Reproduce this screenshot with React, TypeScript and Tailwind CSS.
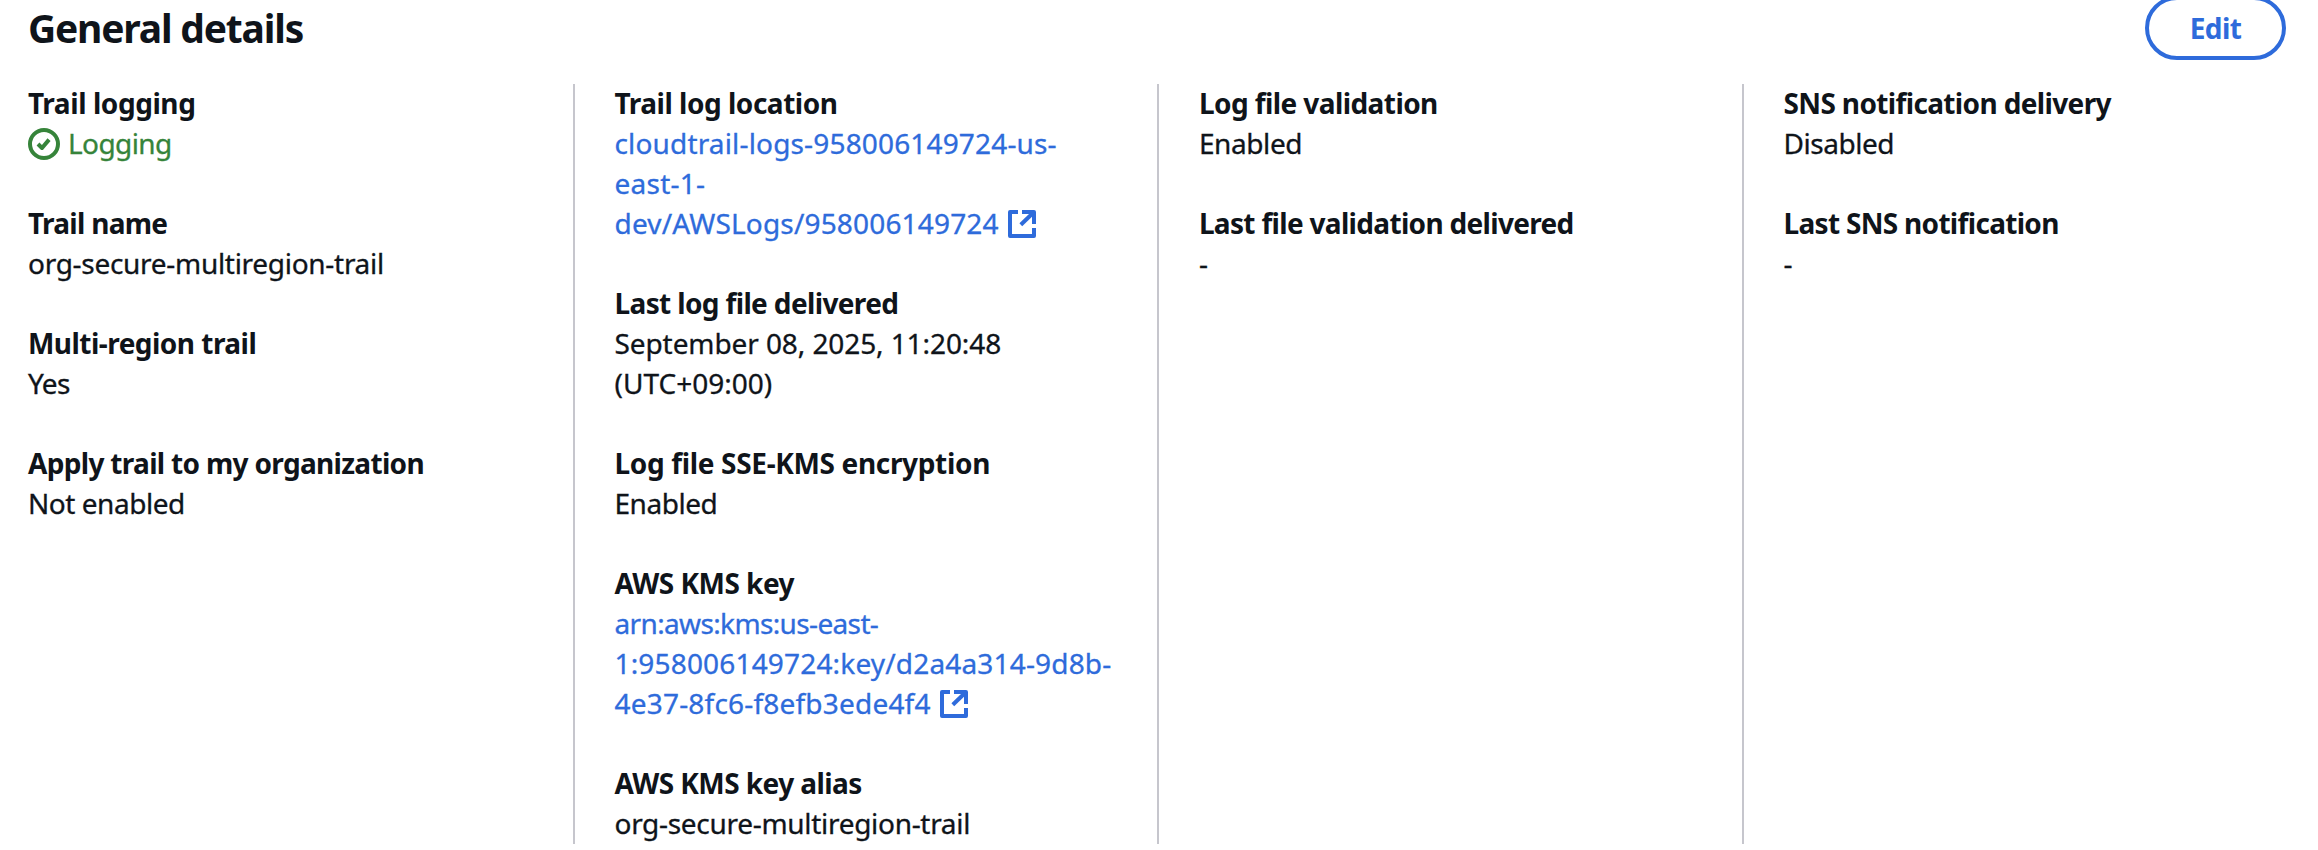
import type { ReactNode } from "react";

function CheckIcon() {
  return (
    <svg
      viewBox="0 0 16 16"
      className="mt-0.5 size-8 shrink-0"
      fill="none"
      stroke="currentColor"
      strokeWidth="2"
      strokeLinejoin="round"
    >
      <circle cx="8" cy="8" r="7" />
      <path d="m5 8 2 2 3.521-4.2" />
    </svg>
  );
}

function ExternalIcon() {
  return (
    <svg
      viewBox="0 0 16 16"
      className="mt-0.5 size-8 shrink-0"
      fill="none"
      stroke="currentColor"
      strokeWidth="2"
      strokeLinejoin="round"
    >
      <path d="M6 2H2v12h12v-4" />
      <path d="M8 2h6v6" />
      <path d="M14 2 7.4 8.4" />
    </svg>
  );
}

function Field({ label, spacing, children }: { label: string; spacing: string; children: ReactNode }) {
  return (
    <div className="flex flex-col">
      <dt className={`font-bold ${spacing}`}>{label}</dt>
      <dd className="flex flex-col [-webkit-text-stroke:0.3px]">{children}</dd>
    </div>
  );
}

function Column({ first = false, children }: { first?: boolean; children: ReactNode }) {
  return (
    <div className={first ? "" : "border-l-2 border-[#c6c6cd] pl-[39.5px]"}>
      <dl className="-mt-px flex flex-col gap-10">{children}</dl>
    </div>
  );
}

export default function App() {
  return (
    <main className="flex h-[850px] flex-col overflow-hidden bg-white pr-8 pl-7 font-['Noto_Sans','Open_Sans',sans-serif] text-[28px] leading-10 whitespace-nowrap text-[#0f141a]">
      <header className="flex h-[84px] items-start justify-between">
        <h2 className="pt-px text-[39px] leading-[54px] font-bold tracking-[-1.2px]">General details</h2>
        <button className="-mt-1 flex h-16 w-[141px] items-center justify-center rounded-full border-4 border-[#2e6bdb] font-bold tracking-[-0.58px] text-[#2e6bdb]">
          Edit
        </button>
      </header>

      <div className="grid h-[760px] grid-cols-[545px_584.4px_584.6px_544px]">
        <Column first>
          <Field label="Trail logging" spacing="tracking-[-0.43px]">
            <span className="flex items-center gap-2 text-[#36843a]">
              <CheckIcon />
              <span className="tracking-[-0.6px]">Logging</span>
            </span>
          </Field>
          <Field label="Trail name" spacing="tracking-[-0.72px]">
            <span className="tracking-[-0.29px]">org-secure-multiregion-trail</span>
          </Field>
          <Field label="Multi-region trail" spacing="tracking-[-0.53px]">
            <span className="tracking-[-0.6px]">Yes</span>
          </Field>
          <Field label="Apply trail to my organization" spacing="tracking-[-0.68px]">
            <span className="tracking-[-0.46px]">Not enabled</span>
          </Field>
        </Column>

        <Column>
          <Field label="Trail log location" spacing="tracking-[-0.48px]">
            <a className="flex flex-col text-[#2e6bdb]">
              <span className="tracking-[0.16px]">cloudtrail-logs-958006149724-us-</span>
              <span className="tracking-[0.24px]">east-1-</span>
              <span className="flex items-center gap-[7.5px]">
                <span className="tracking-[0.17px]">dev/AWSLogs/958006149724</span>
                <ExternalIcon />
              </span>
            </a>
          </Field>
          <Field label="Last log file delivered" spacing="tracking-[-0.64px]">
            <span className="tracking-[-0.09px]">September 08, 2025, 11:20:48</span>
            <span className="tracking-[0.02px]">(UTC+09:00)</span>
          </Field>
          <Field label="Log file SSE-KMS encryption" spacing="tracking-[-0.34px]">
            <span className="tracking-[-0.45px]">Enabled</span>
          </Field>
          <Field label="AWS KMS key" spacing="tracking-[-0.52px]">
            <a className="flex flex-col text-[#2e6bdb]">
              <span className="tracking-[-0.64px]">arn:aws:kms:us-east-</span>
              <span className="tracking-[0.17px]">1:958006149724:key/d2a4a314-9d8b-</span>
              <span className="flex items-center gap-[7.5px]">
                <span className="tracking-[0.2px]">4e37-8fc6-f8efb3ede4f4</span>
                <ExternalIcon />
              </span>
            </a>
          </Field>
          <Field label="AWS KMS key alias" spacing="tracking-[-0.56px]">
            <span className="tracking-[-0.3px]">org-secure-multiregion-trail</span>
          </Field>
        </Column>

        <Column>
          <Field label="Log file validation" spacing="tracking-[-0.58px]">
            <span className="tracking-[-0.4px]">Enabled</span>
          </Field>
          <Field label="Last file validation delivered" spacing="tracking-[-0.68px]">
            <span>-</span>
          </Field>
        </Column>

        <Column>
          <Field label="SNS notification delivery" spacing="tracking-[-0.64px]">
            <span className="tracking-[-0.46px]">Disabled</span>
          </Field>
          <Field label="Last SNS notification" spacing="tracking-[-0.69px]">
            <span>-</span>
          </Field>
        </Column>
      </div>
    </main>
  );
}
